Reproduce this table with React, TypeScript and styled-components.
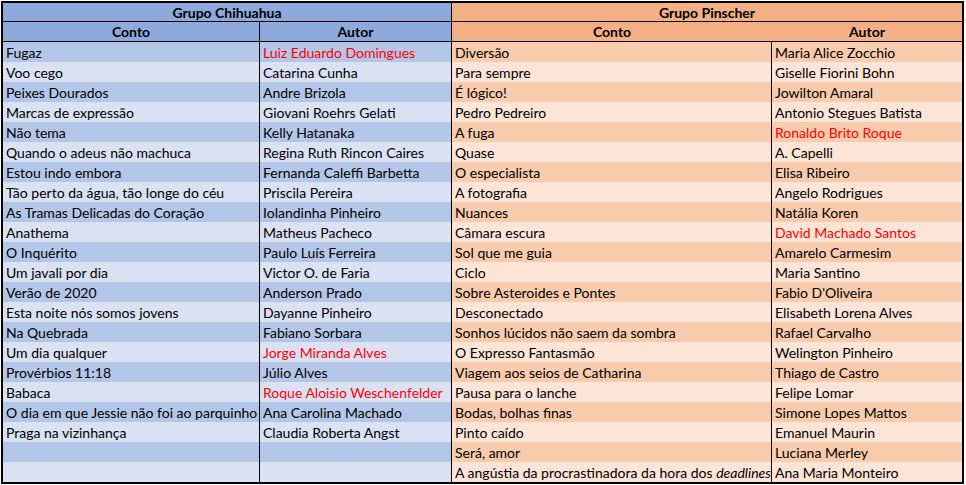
import styled, { createGlobalStyle, css } from 'styled-components';

const GlobalStyle = createGlobalStyle`
  html, body {
    margin: 0;
    padding: 0;
    background: #ffffff;
  }
  body {
    font-family: Lato, "Liberation Sans", sans-serif;
    font-size: 14px;
    color: #000000;
  }
`;

type Tone = 'blue' | 'orange';

const palette = {
  blue: { head: '#8ea9db', dark: '#b4c6e7', light: '#d9e1f2' },
  orange: { head: '#f4b084', dark: '#f8cbad', light: '#fce4d6' },
};

const Sheet = styled.div`
  margin: 1px 0 0 1px;
  width: 959px;
  border: 2px solid #000000;
  display: grid;
  grid-template-columns: 257px 192px 320px 190px;
`;

const GroupHeader = styled.div<{ $tone: Tone; $divider?: boolean }>`
  grid-column: span 2;
  height: 17px;
  padding-top: 1px;
  line-height: 17px;
  background: ${(p) => palette[p.$tone].head};
  border-bottom: 1px solid #000000;
  ${(p) => p.$divider && css`border-right: 1px solid #000000;`}
  font-weight: bold;
  text-align: center;
`;

const ColHeader = styled.div<{ $tone: Tone; $divider?: boolean }>`
  height: 18px;
  padding-top: 1px;
  line-height: 18px;
  background: ${(p) => palette[p.$tone].head};
  border-bottom: 1px solid #000000;
  ${(p) => p.$divider && css`border-right: 1px solid #000000;`}
  font-weight: bold;
  text-align: center;
`;

const Cell = styled.div<{ $tone: Tone; $dark: boolean; $red?: boolean; $divider?: boolean }>`
  height: 18px;
  padding: 2px 0 0 3px;
  line-height: 18px;
  background: ${(p) => (p.$dark ? palette[p.$tone].dark : palette[p.$tone].light)};
  color: ${(p) => (p.$red ? '#ff0000' : '#000000')};
  ${(p) => p.$divider && css`border-right: 1px solid #000000;`}
  white-space: nowrap;
  overflow: hidden;
`;

type Entry = { conto: React.ReactNode; autor: string; red?: boolean };

const chihuahua: Entry[] = [
  { conto: 'Fugaz', autor: 'Luiz Eduardo Domingues', red: true },
  { conto: 'Voo cego', autor: 'Catarina Cunha' },
  { conto: 'Peixes Dourados', autor: 'Andre Brizola' },
  { conto: 'Marcas de expressão', autor: 'Giovani Roehrs Gelati' },
  { conto: 'Não tema', autor: 'Kelly Hatanaka' },
  { conto: 'Quando o adeus não machuca', autor: 'Regina Ruth Rincon Caires' },
  { conto: 'Estou indo embora', autor: 'Fernanda Caleffi Barbetta' },
  { conto: 'Tão perto da água, tão longe do céu', autor: 'Priscila Pereira' },
  { conto: 'As Tramas Delicadas do Coração', autor: 'Iolandinha Pinheiro' },
  { conto: 'Anathema', autor: 'Matheus Pacheco' },
  { conto: 'O Inquérito', autor: 'Paulo Luís Ferreira' },
  { conto: 'Um javali por dia', autor: 'Victor O. de Faria' },
  { conto: 'Verão de 2020', autor: 'Anderson Prado' },
  { conto: 'Esta noite nós somos jovens', autor: 'Dayanne Pinheiro' },
  { conto: 'Na Quebrada', autor: 'Fabiano Sorbara' },
  { conto: 'Um dia qualquer', autor: 'Jorge Miranda Alves', red: true },
  { conto: 'Provérbios 11:18', autor: 'Júlio Alves' },
  { conto: 'Babaca', autor: 'Roque Aloisio Weschenfelder', red: true },
  { conto: 'O dia em que Jessie não foi ao parquinho', autor: 'Ana Carolina Machado' },
  { conto: 'Praga na vizinhança', autor: 'Claudia Roberta Angst' },
  { conto: '', autor: '' },
  { conto: '', autor: '' },
];

const pinscher: Entry[] = [
  { conto: 'Diversão', autor: 'Maria Alice Zocchio' },
  { conto: 'Para sempre', autor: 'Giselle Fiorini Bohn' },
  { conto: 'É lógico!', autor: 'Jowilton Amaral' },
  { conto: 'Pedro Pedreiro', autor: 'Antonio Stegues Batista' },
  { conto: 'A fuga', autor: 'Ronaldo Brito Roque', red: true },
  { conto: 'Quase', autor: 'A. Capelli' },
  { conto: 'O especialista', autor: 'Elisa Ribeiro' },
  { conto: 'A fotografia', autor: 'Angelo Rodrigues' },
  { conto: 'Nuances', autor: 'Natália Koren' },
  { conto: 'Câmara escura', autor: 'David Machado Santos', red: true },
  { conto: 'Sol que me guia', autor: 'Amarelo Carmesim' },
  { conto: 'Ciclo', autor: 'Maria Santino' },
  { conto: 'Sobre Asteroides e Pontes', autor: "Fabio D'Oliveira" },
  { conto: 'Desconectado', autor: 'Elisabeth Lorena Alves' },
  { conto: 'Sonhos lúcidos não saem da sombra', autor: 'Rafael Carvalho' },
  { conto: 'O Expresso Fantasmão', autor: 'Welington Pinheiro' },
  { conto: 'Viagem aos seios de Catharina', autor: 'Thiago de Castro' },
  { conto: 'Pausa para o lanche', autor: 'Felipe Lomar' },
  { conto: 'Bodas, bolhas finas', autor: 'Simone Lopes Mattos' },
  { conto: 'Pinto caído', autor: 'Emanuel Maurin' },
  { conto: 'Será, amor', autor: 'Luciana Merley' },
  {
    conto: (
      <>
        A angústia da procrastinadora da hora dos <i>deadlines</i>
      </>
    ),
    autor: 'Ana Maria Monteiro',
  },
];

export default function App() {
  return (
    <>
      <GlobalStyle />
      <Sheet>
        <GroupHeader $tone="blue" $divider>Grupo Chihuahua</GroupHeader>
        <GroupHeader $tone="orange">Grupo Pinscher</GroupHeader>

        <ColHeader $tone="blue" $divider>Conto</ColHeader>
        <ColHeader $tone="blue" $divider>Autor</ColHeader>
        <ColHeader $tone="orange">Conto</ColHeader>
        <ColHeader $tone="orange">Autor</ColHeader>

        {chihuahua.map((c, i) => {
          const p = pinscher[i];
          const dark = i % 2 === 0;
          return (
            <div key={i} style={{ display: 'contents' }}>
              <Cell $tone="blue" $dark={dark} $divider>{c.conto}</Cell>
              <Cell $tone="blue" $dark={dark} $red={c.red} $divider>{c.autor}</Cell>
              <Cell $tone="orange" $dark={dark} $divider>{p.conto}</Cell>
              <Cell $tone="orange" $dark={dark} $red={p.red}>{p.autor}</Cell>
            </div>
          );
        })}
      </Sheet>
    </>
  );
}
